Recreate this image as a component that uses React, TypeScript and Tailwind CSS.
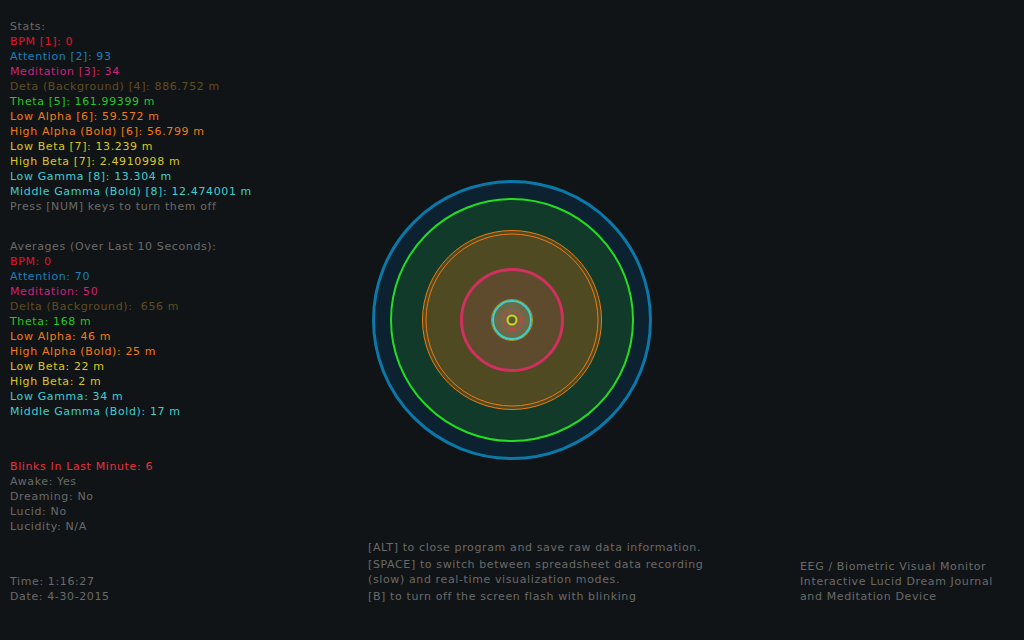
const stats = [
  { label: 'BPM [1]: 0', color: 'text-[#e8102a]' },
  { label: 'Attention [2]: 93', color: 'text-[#1680b8]' },
  { label: 'Meditation [3]: 34', color: 'text-[#d0207a]' },
  { label: 'Deta (Background) [4]: 886.752 m', color: 'text-[#5e4d22]' },
  { label: 'Theta [5]: 161.99399 m', color: 'text-[#22c822]' },
  { label: 'Low Alpha [6]: 59.572 m', color: 'text-[#f07a10]' },
  { label: 'High Alpha (Bold) [6]: 56.799 m', color: 'text-[#f07a10]' },
  { label: 'Low Beta [7]: 13.239 m', color: 'text-[#d8c81a]' },
  { label: 'High Beta [7]: 2.4910998 m', color: 'text-[#d8c81a]' },
  { label: 'Low Gamma [8]: 13.304 m', color: 'text-[#3ccfcf]' },
  { label: 'Middle Gamma (Bold) [8]: 12.474001 m', color: 'text-[#3ccfcf]' },
];

const averages = [
  { label: 'BPM: 0', color: 'text-[#e8102a]' },
  { label: 'Attention: 70', color: 'text-[#1680b8]' },
  { label: 'Meditation: 50', color: 'text-[#d0207a]' },
  { label: 'Delta (Background):  656 m', color: 'text-[#5e4d22]' },
  { label: 'Theta: 168 m', color: 'text-[#22c822]' },
  { label: 'Low Alpha: 46 m', color: 'text-[#f07a10]' },
  { label: 'High Alpha (Bold): 25 m', color: 'text-[#f07a10]' },
  { label: 'Low Beta: 22 m', color: 'text-[#d8c81a]' },
  { label: 'High Beta: 2 m', color: 'text-[#d8c81a]' },
  { label: 'Low Gamma: 34 m', color: 'text-[#3ccfcf]' },
  { label: 'Middle Gamma (Bold): 17 m', color: 'text-[#3ccfcf]' },
];

function Line({ children, className = 'text-[#6a6a6a]' }: { children: React.ReactNode; className?: string }) {
  return <div className={`whitespace-pre ${className}`}>{children}</div>;
}

function Rings() {
  return (
    <svg width="288" height="288" viewBox="0 0 288 288">
      <circle cx="144" cy="144" r="138.5" fill="#0c2230" stroke="#0a78a8" strokeWidth="3" />
      <circle cx="144" cy="144" r="121" fill="#113a2a" stroke="#22dd22" strokeWidth="2" />
      <circle cx="144" cy="144" r="89.5" fill="#4f4a22" stroke="#f07a10" strokeWidth="1" />
      <circle cx="144" cy="144" r="86" fill="none" stroke="#f07a10" strokeWidth="1" />
      <circle cx="144" cy="144" r="50.5" fill="#5e4a2c" stroke="#d03060" strokeWidth="3" />
      <circle cx="144" cy="144" r="20.5" fill="none" stroke="#d8c81a" strokeWidth="1" opacity="0.6" />
      <circle cx="144" cy="144" r="19" fill="#6b6a48" stroke="#3ccfcf" strokeWidth="2" />
      <circle cx="144" cy="144" r="11" fill="none" stroke="#d84040" strokeWidth="1" opacity="0.8" />
      <circle cx="144" cy="144" r="8.5" fill="none" stroke="#d84040" strokeWidth="1" opacity="0.8" />
      <circle cx="144" cy="144" r="4.5" fill="#5a5a30" stroke="#d8d020" strokeWidth="2" />
    </svg>
  );
}

export default function App() {
  return (
    <div className="w-[1024px] h-[640px] bg-[#111416] flex text-[11px] leading-[15px] tracking-[0.62px] font-['DejaVu_Sans',sans-serif] overflow-hidden">
      {/* left readouts */}
      <div className="w-[368px] pl-[10px] pt-[19px] flex flex-col">
        <Line>Stats:</Line>
        {stats.map((s) => (
          <Line key={s.label} className={s.color}>{s.label}</Line>
        ))}
        <Line>Press [NUM] keys to turn them off</Line>

        <div className="mt-[25px]">
          <Line>Averages (Over Last 10 Seconds):</Line>
          {averages.map((s) => (
            <Line key={s.label} className={s.color}>{s.label}</Line>
          ))}
        </div>

        <div className="mt-[40px]">
          <Line className="text-[#e83040]">Blinks In Last Minute: 6</Line>
          <Line>Awake: Yes</Line>
          <Line>Dreaming: No</Line>
          <Line>Lucid: No</Line>
          <Line>Lucidity: N/A</Line>
        </div>

        <div className="mt-[40px]">
          <Line>Time: 1:16:27</Line>
          <Line>Date: 4-30-2015</Line>
        </div>
      </div>

      {/* visualizer + key help */}
      <div className="w-[432px] flex flex-col">
        <div className="mt-[176px]">
          <Rings />
        </div>
        <div className="mt-[76px] flex flex-col gap-[2px] text-[#6a6a6a]">
          <div>[ALT] to close program and save raw data information.</div>
          <div>[SPACE] to switch between spreadsheet data recording<br />(slow) and real-time visualization modes.</div>
          <div>[B] to turn off the screen flash with blinking</div>
        </div>
      </div>

      {/* title */}
      <div className="flex-1 flex flex-col justify-end pb-[36px] text-[#6a6a6a]">
        <div>EEG / Biometric Visual Monitor</div>
        <div>Interactive Lucid Dream Journal</div>
        <div>and Meditation Device</div>
      </div>
    </div>
  );
}
